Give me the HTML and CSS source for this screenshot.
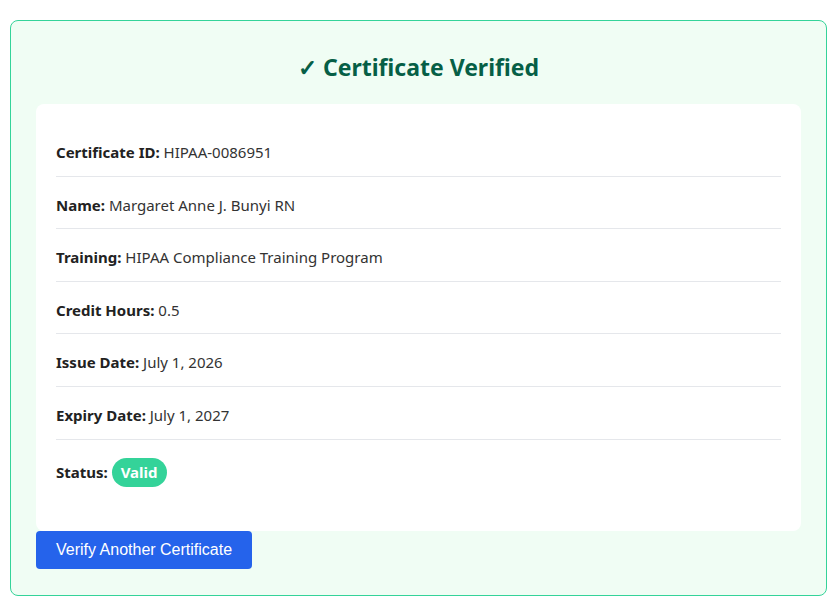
FILE: index.html
```html
<!doctype html>
<html lang="en">
    <head>
        <title>Certificate Verified</title>
        <meta charset="UTF-8"/>
        <link rel="stylesheet" href="styles.css">
    </head>
    <body>
        <div class="result-box">
            <h2 class="result-title">✓ Certificate Verified</h2>
            <div class="details">
                <p class="row"><strong>Certificate ID:</strong> HIPAA-0086951</p>
                <p class="row"><strong>Name:</strong> Margaret Anne J. Bunyi RN</p>
                <p class="row"><strong>Training:</strong> HIPAA Compliance Training Program</p>
                <p class="row"><strong>Credit Hours:</strong> 0.5</p>
                <p class="row"><strong>Issue Date:</strong> July 1, 2026</p>
                <p class="row"><strong>Expiry Date:</strong> July 1, 2027</p>
                <p class="row"><strong>Status:</strong> <span class="badge">Valid</span></p>
            </div>
            <button class="verify-button">Verify Another Certificate</button>
        </div>
    </body>
</html>
```

FILE: styles.css
```css
body {
    margin: 0;
    padding: 20px 13px 10px 10px;
    font-family: "Noto Sans", "Open Sans", sans-serif;
    font-size: 15px;
    color: #333333;
}
.result-box {
    padding: 25px 25px 26px;
    background-color: #f0fdf4;
    border: 1px solid #34d399;
    border-radius: 8px;
}
.result-title {
    margin: 0 0 20px;
    padding-top: 4px;
    text-align: center;
    font-size: 23px;
    line-height: 34px;
    color: #065f46;
}
.details {
    padding: 20px 20px 32px;
    background-color: #ffffff;
    border-radius: 8px;
}
.row {
    margin: 0;
    padding: 18px 0 12px;
    line-height: 21.6px;
    border-bottom: 1px solid #e5e7eb;
}
.row:last-child {
    border-bottom: 0;
}
.row strong {
    color: #222222;
}
.badge {
    display: inline-block;
    padding: 4px 9px;
    font-weight: bold;
    color: #ffffff;
    background-color: #34d399;
    border-radius: 16px;
}
.verify-button {
    padding: 10px 20px;
    font-family: "Liberation Sans", Arial, sans-serif;
    font-size: 16px;
    color: #ffffff;
    background-color: #2563eb;
    border: 0;
    border-radius: 4px;
    cursor: pointer;
}
```
